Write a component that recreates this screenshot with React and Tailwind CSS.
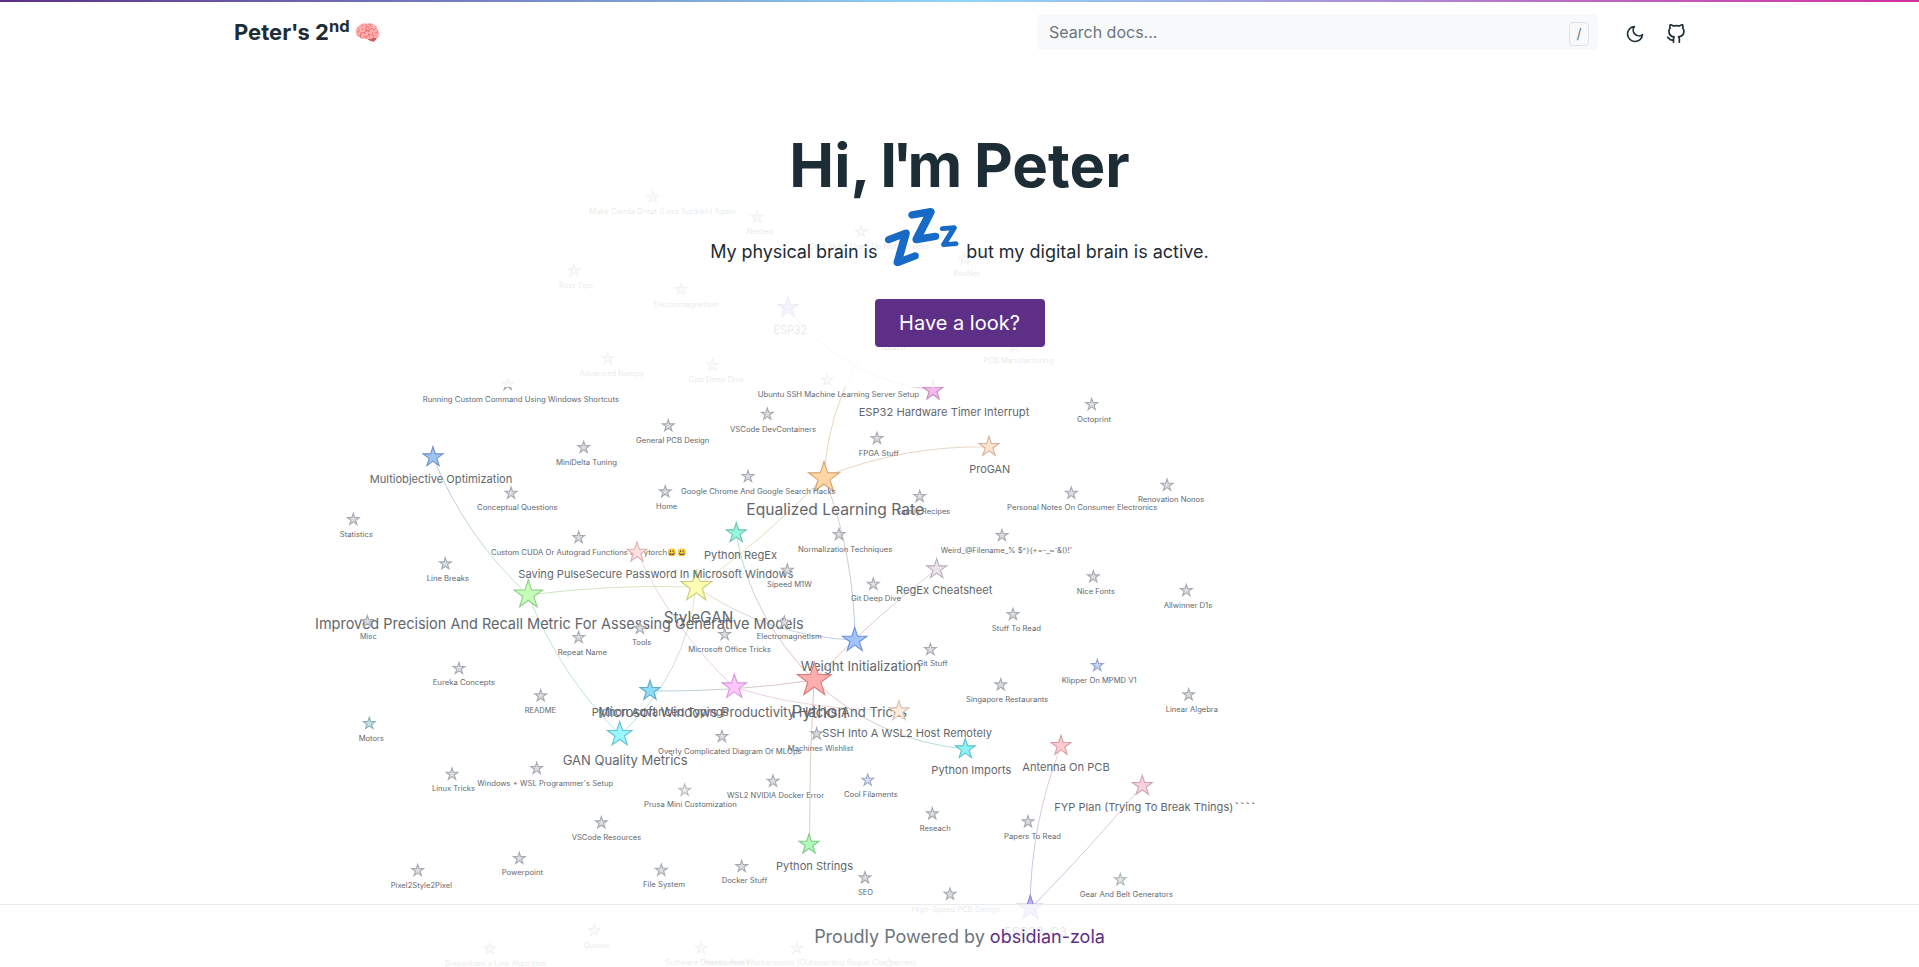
import React from "react";
import { FiGithub, FiMoon } from "react-icons/fi";

const GREY = ["#dadee3", "#a6aab0"];
const TIERS = {
  s: { r: 6.2, font: 7.1 },
  m: { r: 10.5, font: 11 },
  e: { r: 10.5, font: 11.6 },
  l: { r: 12.9, font: 12.9 },
  xl: { r: 14.9, font: 14.8 },
  xxl: { r: 16.3, font: 15.8 },
  top: { r: 17.8, font: 16.6 },
};

// tier, star x, star tip y, label left, label right, label baseline, label, [fill, stroke], [tail left, tail right, tail size, tail]
const NODES = [
  ["xxl", 824, 461.3, 746.3, 924, 515, "Equalized Learning Rate", ["#ffd6a3", "#d0a273"]],
  ["xl", 528.3, 579.5, 315, 803.7, 629, "Improved Precision And Recall Metric For Assessing Generative Models", ["#c6ffb8", "#92cc88"]],
  ["l", 734.3, 673.7, 598.3, 907, 717, "Microsoft Windows Productivity Hacks And Tricks", ["#ffc6ff", "#d698d6"]],
  ["xxl", 696.3, 570, 663.7, 733.3, 622.5, "StyleGAN", ["#feffb3", "#cccb80"]],
  ["l", 854.7, 627, 800.7, 921, 671, "Weight Initialization", ["#a0c4ff", "#7093d6"]],
  ["top", 814.3, 662, 791.5, 847, 718, "Python", ["#ffadad", "#d67c7c"]],
  ["l", 619.7, 721.3, 562.7, 687.7, 765, "GAN Quality Metrics", ["#9bf6ff", "#64c3cc"]],
  ["l", 1030.3, 895, 1004, 1067, 937, "ESP32-C3", ["#bdb2ff", "#8a80cc"]],
  ["e", 788, 297, 773.5, 807, 334, "ESP32", ["#bdb2ff", "#8a80cc"]],
  ["l", 892, 309, 876.3, 906, 349.7, "Adam", ["#ffd6a3", "#d0a273"]],
  ["m", 433, 446.3, 369.7, 512.3, 483, "Multiobjective Optimization", ["#a1c4f5", "#6f90c8"]],
  ["m", 933, 379.7, 858.7, 1029.3, 415.7, "ESP32 Hardware Timer Interrupt", ["#f3b9ea", "#c78dc0"]],
  ["m", 736.3, 522.3, 704, 777, 559, "Python RegEx", ["#98f6e0", "#65c4ae"]],
  ["m", 936.7, 558.3, 896, 992.3, 593.7, "RegEx Cheatsheet", ["#ebe3e9", "#b8b0b6"]],
  ["m", 989, 436, 969.3, 1010.3, 473, "ProGAN", ["#ffe3cc", "#d0b29b"]],
  ["m", 650, 680, 591.7, 728.7, 716.3, "Python Advanced Typings", ["#8fdcf6", "#5fabc7"]],
  ["m", 965.3, 738.3, 931.3, 1011.3, 774, "Python Imports", ["#8df1f6", "#5cc0c5"]],
  ["m", 809, 833.7, 776, 853, 870, "Python Strings", ["#b0fbba", "#80ca89"]],
  ["m", 1061, 735, 1022.3, 1109.7, 771, "Antenna On PCB", ["#ffcdd0", "#d79fa2"]],
  ["m", 1142.3, 775, 1054.3, 1233.3, 811, "FYP Plan (Trying To Break Things)", ["#fbd0e0", "#cea2b2"], [1234, 1256, 11, "````"]],
  ["s", 507.7, 378, 422.7, 619, 402, "Running Custom Command Using Windows Shortcuts"],
  ["s", 668.3, 419.3, 636, 709.3, 442.7, "General PCB Design"],
  ["s", 583.7, 441, 556, 617, 464.8, "MiniDelta Tuning"],
  ["s", 511, 486.7, 477, 557.7, 510, "Conceptual Questions"],
  ["s", 665.3, 485.3, 656, 677.3, 509, "Home"],
  ["s", 353.3, 513, 339.7, 373, 537, "Statistics"],
  ["s", 578.7, 531, 491, 667, 555, "Custom CUDA Or Autograd Functions In Pytorch", GREY, [667.5, 686.5, 7.8, "😃😃"]],
  ["m", 637, 541.7, 518.3, 793.3, 578, "Saving PulseSecure Password In Microsoft Windows", ["#ffe0e2", "#dcb2b5"]],
  ["s", 445.3, 557.3, 426.7, 469, 581, "Line Breaks"],
  ["s", 367.3, 615, 360, 376.7, 639, "Misc"],
  ["s", 578.7, 631, 557.7, 607, 654.8, "Repeat Name"],
  ["s", 640, 621.7, 632, 651.3, 645, "Tools"],
  ["s", 827.3, 373.5, 757.7, 919, 397, "Ubuntu SSH Machine Learning Server Setup"],
  ["s", 767.3, 407.7, 730, 816, 432, "VSCode DevContainers"],
  ["s", 877, 432, 858.7, 899, 456, "FPGA Stuff"],
  ["s", 748, 470, 681, 835.7, 494, "Google Chrome And Google Search Hacks"],
  ["s", 919.7, 490, 897, 950.3, 514, "Family Recipes"],
  ["s", 839, 528, 798, 892.3, 552, "Normalization Techniques"],
  ["s", 787.3, 563.7, 767, 811.7, 587, "Sipeed M1W"],
  ["s", 873.3, 577.7, 851, 901, 601, "Git Deep Dive"],
  ["s", 1091.7, 398, 1077, 1111, 422, "Octoprint"],
  ["s", 1071.3, 486.7, 1007, 1157.3, 510, "Personal Notes On Consumer Electronics"],
  ["s", 1167, 478.7, 1138, 1204.3, 502, "Renovation Nonos"],
  ["s", 1002, 529, 940.7, 1072, 553, "Weird_@Filename_% $^}{+=-_~`&()!'"],
  ["s", 1093.3, 570.3, 1076.7, 1115, 594, "Nice Fonts"],
  ["s", 1186.3, 584, 1163.7, 1212.3, 608, "Allwinner D1s"],
  ["s", 1013, 608, 991.7, 1041, 631, "Stuff To Read"],
  ["s", 930.3, 643, 917.3, 947.8, 666, "Git Stuff"],
  ["s", 724.7, 628, 688.3, 771, 652, "Microsoft Office Tricks"],
  ["s", 784.3, 615.7, 756.7, 821.7, 639, "Electromagnetism"],
  ["s", 722, 730, 658, 801.7, 754, "Overly Complicated Diagram Of MLOps"],
  ["s", 816.7, 727.3, 787.7, 853.3, 751, "Machines Wishlist"],
  ["m", 899, 700.3, 822.3, 992, 737, "SSH Into A WSL2 Host Remotely", ["#feebdc", "#d6c0b0"]],
  ["s", 773, 774.7, 727, 824, 798, "WSL2 NVIDIA Docker Error"],
  ["s", 867.7, 773.7, 844, 897.7, 797, "Cool Filaments", ["#d3def8", "#a0aac4"]],
  ["s", 684.7, 783.7, 644, 736.7, 807, "Prusa Mini Customization", ["#ecebe8", "#b9b8b5"]],
  ["s", 932.3, 807.3, 919.7, 950.7, 831, "Reseach"],
  ["s", 1028, 815.3, 1004, 1061, 839, "Papers To Read"],
  ["s", 661.3, 863.7, 643, 685, 887, "File System"],
  ["s", 741.7, 860, 721.7, 767.3, 883, "Docker Stuff"],
  ["s", 865, 871.3, 858, 873, 895, "SEO"],
  ["s", 950, 887.7, 911.7, 1000, 912, "High-Speed PCB Design"],
  ["s", 701, 941.7, 665.3, 748.7, 965, "Software Development"],
  ["s", 796.7, 941.7, 704.3, 916.3, 965, "Hacks And Workarounds (Outsmarting Rogue Companies)"],
  ["s", 888.7, 957.5, 0, 0, 0, ""],
  ["s", 459, 662, 432.7, 495, 685, "Eureka Concepts"],
  ["s", 540.7, 689.3, 524.7, 556, 713, "README"],
  ["s", 369.3, 717, 358.7, 384, 741, "Motors", ["#bfe3e6", "#8db0b3"]],
  ["s", 452, 767.7, 432, 475, 791, "Linux Tricks"],
  ["s", 536.7, 762, 477.3, 613.3, 786, "Windows + WSL Programmer's Setup"],
  ["s", 601.3, 816.3, 571.7, 641.3, 840, "VSCode Resources"],
  ["s", 519.3, 852, 501.7, 543, 875, "Powerpoint"],
  ["s", 417.7, 864, 390.7, 452, 888, "Pixel2Style2Pixel"],
  ["s", 594.3, 924, 583.7, 609.7, 948, "Quotes"],
  ["s", 490, 942.3, 445, 546.3, 966, "Bresenham's Line Algorithm"],
  ["s", 1000.7, 678.3, 966, 1048.3, 702, "Singapore Restaurants"],
  ["s", 1097.3, 659, 1061.7, 1136.7, 683, "Klipper On MPMD V1", ["#c5d5fb", "#93a2c8"]],
  ["s", 1188.7, 688.3, 1165.7, 1218, 712, "Linear Algebra"],
  ["s", 1120.3, 873.3, 1079.7, 1173, 897, "Gear And Belt Generators", ["#dfe9e5", "#acb8b3"]],
  ["s", 652.7, 190.7, 589, 735.5, 214, "Make Conda Great (Less Suckish) Again"],
  ["s", 757, 210.7, 746.5, 773, 234, "Nested"],
  ["s", 573.9, 264, 559, 593, 288, "Rust Tips"],
  ["s", 681.2, 283, 653.5, 718.8, 307, "Electromagnetism"],
  ["s", 607.8, 352, 579.6, 644, 376, "Advanced Numpy"],
  ["s", 712.7, 358.7, 688.6, 743.7, 382, "Cpp Deep Dive"],
  ["s", 861.2, 225.3, 808.6, 929, 249, "Cool Skills That I Do Not Possess"],
  ["s", 964.5, 252.7, 953.5, 979.6, 276, "ResNet"],
  ["s", 1014.7, 340, 983.3, 1053.5, 363, "PCB Manufacturing"],
];

// start x/y, control x/y, end x/y, start colour, end colour
const EDGES = [
  [788, 308, 843, 380, 933, 390, "#8a80cc", "#c78dc0"],
  [824, 477, 829.5, 390, 885, 322, "#d0a273", "#d8c07c"],
  [824, 477, 903.5, 445, 989, 447, "#d0a273", "#d0b29b"],
  [824, 477, 763, 541, 696, 587, "#d0a273", "#cccb80"],
  [824, 477, 854, 552, 855, 640, "#d0a273", "#7093d6"],
  [736, 533, 750, 616, 814, 680, "#65c4ae", "#d67c7c"],
  [696, 587, 612, 584, 528, 595, "#cccb80", "#92cc88"],
  [696, 587, 770, 637, 855, 640, "#cccb80", "#7093d6"],
  [696, 587, 686, 675, 620, 735, "#cccb80", "#64c3cc"],
  [433, 457, 465, 536, 528, 595, "#6f90c8", "#92cc88"],
  [528, 595, 560, 675, 620, 735, "#92cc88", "#64c3cc"],
  [637, 552, 672, 629, 734, 687, "#dcb2b5", "#d698d6"],
  [650, 691, 735, 692, 814, 680, "#5fabc7", "#d67c7c"],
  [734, 687, 800, 709, 899, 711, "#d698d6", "#d6c0b0"],
  [814, 680, 876, 740, 965, 749, "#d67c7c", "#5cc0c5"],
  [814, 680, 809, 762, 809.5, 844, "#d67c7c", "#80ca89"],
  [814, 680, 873, 618, 937, 569, "#d67c7c", "#b8b0b6"],
  [1030, 909, 1030.5, 824, 1061, 746, "#8a80cc", "#d79fa2"],
  [1030, 909, 1088, 850, 1142, 786, "#8a80cc", "#cea2b2"],
];

function starPoints(cx, cy, r) {
  return Array.from({ length: 10 }, (_, n) => {
    const radius = n % 2 === 0 ? r : r * 0.385;
    const a = (Math.PI * n) / 5;
    return `${(cx + radius * Math.sin(a)).toFixed(2)},${(cy - radius * Math.cos(a)).toFixed(2)}`;
  }).join(" ");
}

function Label({ left, right, baseline, size, children }) {
  return (
    <text
      x={left}
      y={baseline}
      fontSize={size}
      textLength={right - left}
      lengthAdjust="spacingAndGlyphs"
      className="fill-[#63676d] font-[Inter,'Noto_Color_Emoji',sans-serif]"
    >
      {children}
    </text>
  );
}

function Node({ node }) {
  const [tier, x, tip, left, right, baseline, label, colors = GREY, tail] = node;
  const { r, font } = TIERS[tier];
  return (
    <g>
      <polygon points={starPoints(x, tip + r + 0.3, r)} fill={colors[0]} stroke={colors[1]} strokeWidth="1.1" />
      {label && (
        <Label left={left} right={right} baseline={baseline} size={font}>
          {label}
        </Label>
      )}
      {tail && (
        <Label left={tail[0]} right={tail[1]} baseline={baseline} size={tail[2]}>
          {tail[3]}
        </Label>
      )}
    </g>
  );
}

function Graph() {
  return (
    <svg className="absolute inset-0" width="1919" height="967" viewBox="0 0 1919 967">
      <defs>
        {EDGES.map(([x1, y1, , , x2, y2, a, b], i) => (
          <linearGradient key={i} id={`edge-${i}`} gradientUnits="userSpaceOnUse" x1={x1} y1={y1} x2={x2} y2={y2}>
            <stop offset="0" stopColor={a} />
            <stop offset="1" stopColor={b} />
          </linearGradient>
        ))}
      </defs>
      {EDGES.map(([x1, y1, cx, cy, x2, y2], i) => (
        <path
          key={i}
          d={`M${x1} ${y1}Q${cx} ${cy} ${x2} ${y2}`}
          fill="none"
          stroke={`url(#edge-${i})`}
          strokeOpacity="0.5"
          strokeWidth="1"
        />
      ))}
      {NODES.map((node, i) => (
        <Node key={i} node={node} />
      ))}
    </svg>
  );
}

function Header() {
  return (
    <header className="flex h-[60px] items-center pr-[233px] pl-[234px]">
      <a className="flex items-baseline text-[22px] leading-[30px] font-bold">
        <span className="-mt-px">
          Peter<span className="tracking-[-1px]">'</span>s 2<sup className="-top-[7.5px] text-[16.5px] leading-none">nd</sup>
        </span>
        <span className="ml-[5px] text-[21.5px] leading-none font-normal">🧠</span>
      </a>
      <div className="ml-auto flex h-9 w-[561px] items-center justify-between rounded bg-[#f8f9fa] pr-[9px] pl-3 text-base text-[#6c757d]">
        <span>Search docs...</span>
        <kbd className="mt-1 flex h-6 w-5 items-center justify-center rounded border border-[#dee2e6] font-[Inter] text-sm">/</kbd>
      </div>
      <div className="ml-[27px] flex items-center gap-[21px] pt-[3px]">
        <FiMoon size={20} />
        <FiGithub size={20} />
      </div>
    </header>
  );
}

export default function App() {
  return (
    <div className="relative flex h-[967px] w-[1919px] flex-col overflow-hidden bg-white font-[Inter,'Noto_Color_Emoji',sans-serif] text-[#1d2d35]">
      <Graph />
      <div className="relative flex h-[387px] flex-col bg-white/85">
        <div className="h-0.5 bg-[linear-gradient(90deg,#5d2f86,#8ed6fb_50%,#d32e9d)]" />
        <Header />
        <section className="flex flex-col items-center pt-[67px]">
          <h1 className="text-[60px] leading-[72px] font-bold [word-spacing:-2.5px]">
            Hi, <span className="tracking-[-5px]">I'</span>m Peter
          </h1>
          <p className="-mt-[5.5px] flex h-[75px] items-baseline text-[18px] leading-[75px]">
            <span className="tracking-[-0.08px]">My physical brain is</span>
            <span className="relative top-[2px] mr-[2.5px] ml-[3px] text-[67px]">💤</span>
            <span>but my digital brain is active.</span>
          </p>
          <a className="mt-[28.5px] flex h-12 w-[170px] items-center justify-center rounded bg-[#5d2f86] text-xl text-white">
            Have a look?
          </a>
        </section>
      </div>
      <div className="flex-1" />
      <footer className="relative flex h-[63px] items-center justify-center border-t border-[#e9ecef] bg-white/85 text-[18px] text-[#6c757d]">
        <p>
          Proudly Powered by <a className="text-[#5d2f86]">obsidian-zola</a>
        </p>
      </footer>
    </div>
  );
}
